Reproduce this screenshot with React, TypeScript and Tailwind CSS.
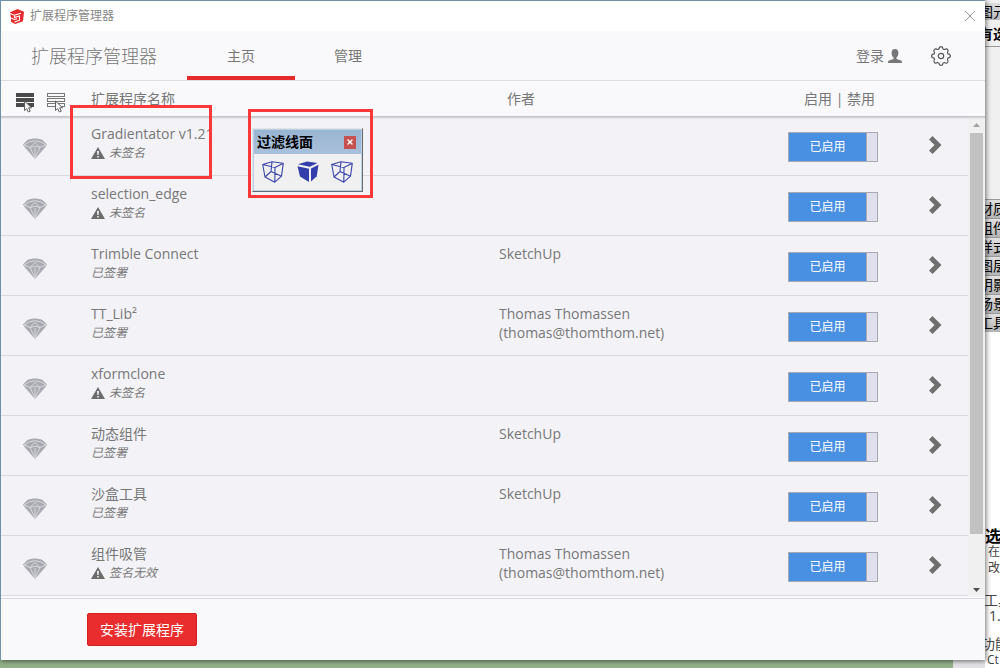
import { FiX } from 'react-icons/fi';

type Extension = {
	name: string;
	status: string;
	warning?: boolean;
	author?: string[];
};

const extensions: Extension[] = [
	{ name: 'Gradientator v1.21', status: '未签名', warning: true },
	{ name: 'selection_edge', status: '未签名', warning: true },
	{ name: 'Trimble Connect', status: '已签署', author: ['SketchUp'] },
	{
		name: 'TT_Lib²',
		status: '已签署',
		author: ['Thomas Thomassen', '(thomas@thomthom.net)'],
	},
	{ name: 'xformclone', status: '未签名', warning: true },
	{ name: '动态组件', status: '已签署', author: ['SketchUp'] },
	{ name: '沙盒工具', status: '已签署', author: ['SketchUp'] },
	{
		name: '组件吸管',
		status: '签名无效',
		warning: true,
		author: ['Thomas Thomassen', '(thomas@thomthom.net)'],
	},
];

const trayPanels = ['材质', '组件', '样式', '图层', '阴影', '场景', '工具'];

const SketchUpLogo = () => (
	<svg width="14" height="15" viewBox="0 0 14 15" aria-hidden="true">
		<path d="M0 3.200 7.500 0 14 2.800l-1 9.400L5 15l-4-2.200 0-4Z" fill="#e62b2d" />
		<path
			d="M0 4.500 4.500 6.200 11 4.200M4.500 6.200v2.300l5-1.500v4.200L4.500 13M1 9l3.500 1.500 2.500-.8"
			fill="none"
			stroke="#fff"
			strokeWidth="1.100"
		/>
	</svg>
);

const RowsIcon = ({ filled }: { filled?: boolean }) => (
	<svg width="19" height="28" viewBox="0 0 19 28" className="block" aria-hidden="true">
		{[8, 13, 18].map((y) => (
			<rect
				key={y}
				x="0.500"
				y={y + 0.5}
				width="17"
				height="3"
				fill={filled ? '#4a4a4a' : '#f9f9fb'}
				stroke={filled ? '#4a4a4a' : '#777'}
			/>
		))}
		<path
			d="M8.500 16v9.500l2.200-1.900 1.600 3.400 2-.9-1.600-3.300h2.900Z"
			fill="#f4f4f6"
			stroke="#555"
			strokeWidth="0.900"
		/>
	</svg>
);

const UserIcon = () => (
	<svg width="14" height="14" viewBox="0 0 14 14" aria-hidden="true">
		<path
			d="M7 0C4.700 0 3.600 1.600 3.600 3.900c0 2 .8 3.800 1.900 4.700v1.300L1 11.600C.3 12 0 12.500 0 14h14c0-1.500-.3-2-1-2.400L8.500 9.900V8.600c1.100-.9 1.900-2.700 1.900-4.700C10.400 1.600 9.300 0 7 0Z"
			fill="#777"
		/>
	</svg>
);

const GearIcon = () => (
	<svg
		width="20"
		height="20"
		viewBox="0 0 20 20"
		fill="none"
		stroke="#555"
		strokeWidth="1.200"
		strokeLinejoin="round"
		aria-hidden="true"
	>
		<circle cx="10" cy="10" r="2.700" />
		<path d="M7.900 3C8.200 1.200 8.600.6 10 .6s1.800.6 2.100 2.400q.9.500 1.400.5c1.500-1 2.200-1.100 3.100-.1s.9 1.600-.1 3.100q0 .5.500 1.400c1.800.3 2.400.7 2.400 2.100s-.6 1.800-2.400 2.100q-.5.900-.5 1.400c1 1.500 1.100 2.200.1 3.100s-1.600.9-3.100-.1q-.5 0-1.400.5c-.3 1.800-.7 2.400-2.100 2.400s-1.800-.6-2.100-2.400q-.9-.5-1.400-.5c-1.500 1-2.200 1.100-3.100.1s-.9-1.600.1-3.100q0-.5-.5-1.400C1.200 11.800.6 11.400.6 10s.6-1.800 2.400-2.100q.5-.9.5-1.400c-1-1.500-1.100-2.200-.1-3.100s1.600-.9 3.100.1q.5 0 1.400-.5Z" />
	</svg>
);

const GemIcon = () => (
	<svg width="24" height="21" viewBox="0 0 24 21" className="block" aria-hidden="true">
		<path d="M4.500 2C9 0 15 0 19.500 2L24 6.500 22.500 9 12 21 1.500 9 0 6.500Z" fill="#a9a9b1" />
		<path
			d="M1 7Q12-1.500 23 7M1 7l6 2.500L12 4.500l5 5L23 7M7 9.500Q12 7 17 9.500M7 9.500 12 20l5-10.500M12 10v8"
			fill="none"
			stroke="#dcdce2"
			strokeWidth="0.900"
		/>
	</svg>
);

const WarningIcon = () => (
	<svg width="14" height="12" viewBox="0 0 14 12" aria-hidden="true">
		<path d="M7 0 14 12H0Z" fill="#6c6c6c" />
		<path d="M6 4h2l-.4 4H6.400ZM6.200 9h1.600v1.600H6.200Z" fill="#f3f3f7" />
	</svg>
);

const ChevronIcon = () => (
	<svg width="14" height="18" viewBox="0 0 14 18" className="block" aria-hidden="true">
		<path d="M4.500 0 13.500 9l-9 9L1 14.500 6.500 9 1 3.500Z" fill="#6f6f6f" />
	</svg>
);

const WireCube = () => (
	<svg
		width="22"
		height="22"
		viewBox="0 0 22 22"
		fill="none"
		stroke="#3a44ac"
		strokeWidth="1.100"
		strokeLinejoin="round"
		aria-hidden="true"
	>
		<path d="M.7 3.500 10 .7l11.300 1.500-1.800 13-6.700 6L3 16ZM.7 3.500l12.300 3 8.300-4.300M13 6.500l-.2 14.700M10 .7 9 10.500 3 16M9 10.500l10.500 4.700" />
	</svg>
);

const SolidCube = () => (
	<svg width="22" height="22" viewBox="0 0 22 22" fill="#343eaa" aria-hidden="true">
		<path d="M1 3.300 10 .5l10.500 1.600-7.700 3.600Z" />
		<path d="M.5 5.200 12 7.700V21L3 15.600Z" />
		<path d="M14 7.500l7.500-3.800-1.800 11.600L14 20.500Z" />
	</svg>
);

const ExtensionRow = ({ extension }: { extension: Extension }) => (
	<tr className="h-[60px] align-top [&>td]:border-b [&>td]:border-[#d9d9df]">
		<td className="pt-[22px] pl-[22px]">
			<GemIcon />
		</td>
		<td className="pt-2">
			<p className="leading-[19px] whitespace-nowrap">{extension.name}</p>
			<p className="flex items-center gap-1 text-xs leading-5 italic">
				{extension.warning && <WarningIcon />}
				{extension.status}
			</p>
		</td>
		<td className="pt-2">
			{extension.author?.map((line) => (
				<p key={line} className="leading-[19px]">
					{line}
				</p>
			))}
		</td>
		<td className="pt-4">
			<button
				type="button"
				role="switch"
				aria-checked="true"
				className="flex h-[30px] w-[90px] border border-[#a9a9b2] bg-[#e0e0ec] text-xs text-white"
			>
				<span className="flex h-full w-[78px] items-center justify-center border-r border-[#a9a9b2] bg-[#4a90e2]">
					已启用
				</span>
			</button>
		</td>
		<td className="pt-5">
			<button type="button" aria-label={`${extension.name} 详情`} className="block">
				<ChevronIcon />
			</button>
		</td>
	</tr>
);

const ScrollBar = () => (
	<div className="flex w-[17px] shrink-0 flex-col items-center bg-[#f0f0f0]" aria-hidden="true">
		<div className="relative h-[35px] w-full bg-[#f9f9fb] shadow-[0_1px_0_#c4c4c8,0_2px_0_#d6d6da,0_3px_0_#e6e6ea]" />
		<svg width="17" height="17" viewBox="0 0 17 17" className="shrink-0">
			<path d="M5 11 8.500 7l3.500 4Z" fill="#a3a3a3" />
		</svg>
		<div className="w-[13px] grow-8 basis-0 bg-[#c1c1c1]" />
		<div className="grow basis-0" />
		<svg width="17" height="12" viewBox="0 0 17 12" className="shrink-0">
			<path d="M5 4h7L8.500 8Z" fill="#505050" />
		</svg>
	</div>
);

const FilterToolbar = () => (
	<div className="absolute top-[109px] left-[248px] z-20 border-3 border-[#fb3839] p-px pt-4 pr-[7px] pb-[3px]">
		<div className="w-[111px] border border-t-[#e3e3e3] border-r-[#696969] border-b-[#696969] border-l-[#e3e3e3] bg-[#b9d1ea] p-px">
			<div className="flex h-6 items-center justify-between bg-linear-to-b from-[#99b4d1] to-[#a9c0dc] pr-[5px] pl-[3px]">
				<h2 className="text-sm font-bold text-black">过滤线面</h2>
				<button
					type="button"
					aria-label="关闭"
					className="flex h-[13px] w-3 items-center justify-center bg-[#c75050] text-white"
				>
					<FiX size={8} strokeWidth={4} />
				</button>
			</div>
			<div className="flex h-9 items-center justify-between bg-[#f0f0f0] px-2">
				<button type="button" aria-label="线">
					<WireCube />
				</button>
				<button type="button" aria-label="面">
					<SolidCube />
				</button>
				<button type="button" aria-label="线面">
					<WireCube />
				</button>
			</div>
		</div>
	</div>
);

const Tray = () => (
	<aside className="flex w-[15px] shrink-0 flex-col overflow-hidden bg-white text-sm whitespace-nowrap text-black">
		<div className="h-[47px] border-b border-[#999] bg-[#f0f0f0]">
			<h2 className="mt-[3px] h-[17px] bg-linear-to-b from-[#ddd] to-[#bbb] -indent-[6px] leading-[17px]">
				图元
			</h2>
			<p className="-indent-[6px] leading-7 font-bold">有选</p>
		</div>
		<div className="h-[152px] bg-[#f0f0f0]" />
		{trayPanels.map((panel) => (
			<h2
				key={panel}
				className="h-[19px] border-t border-[#999] bg-linear-to-b from-[#e2e2e2] to-[#b5b5b5] -indent-[6px] leading-[18px]"
			>
				{panel}
			</h2>
		))}
		<div className="mt-auto leading-4 text-[#444]">
			<h2 className="text-base leading-4 font-bold text-black">选</h2>
			<p className="pl-[3px] text-xs leading-4">在</p>
			<p className="pl-[3px] text-xs leading-4">改</p>
			<h3 className="mt-4 -indent-px leading-4">工具</h3>
			<p className="pl-1 leading-4">1.</p>
			<h3 className="mt-3 -indent-[4px] leading-4">功能</h3>
			<p className="pl-0.5 text-xs leading-4">Ct</p>
		</div>
	</aside>
);

const App = () => (
	<div className="relative flex min-h-screen overflow-hidden bg-[#93b189] font-['Open_Sans','Noto_Sans_CJK_SC',sans-serif] text-sm text-[#777]">
		<div className="flex min-w-0 grow flex-col">
			<main className="relative flex grow flex-col border-t border-l border-[#6f8fab] bg-[#f9f9fb] shadow-[1px_1px_5px_#00000090]">
				<header className="flex h-[30px] items-center bg-white px-[9px]">
					<SketchUpLogo />
					<span className="ml-1.5 text-xs text-[#888]">扩展程序管理器</span>
					<button type="button" aria-label="关闭窗口" className="ml-auto">
						<svg width="12" height="12" viewBox="0 0 12 12" stroke="#999" aria-hidden="true">
							<path d="m1 1 10 10M11 1 1 11" />
						</svg>
					</button>
				</header>

				<nav className="flex h-[50px] items-stretch border-b border-[#dddde1] pr-[34px] pl-[30px]">
					<h1 className="w-[156px] self-center text-lg font-light">扩展程序管理器</h1>
					<a
						href="#home"
						className="flex w-[108px] items-center justify-center border-b-4 border-[#e62b2d] pt-1"
					>
						主页
					</a>
					<a href="#manage" className="flex w-[106px] items-center justify-center">
						管理
					</a>
					<button type="button" className="ml-auto flex items-center gap-1">
						登录
						<UserIcon />
					</button>
					<button type="button" aria-label="设置" className="ml-[29px] self-center">
						<GearIcon />
					</button>
				</nav>

				<div className="flex">
					<div className="min-w-0 grow">
						<table className="w-full table-fixed border-separate border-spacing-0">
							<colgroup>
								<col className="w-[90px]" />
								<col />
								<col className="w-[289px]" />
								<col className="w-[140px]" />
								<col className="w-10" />
							</colgroup>
							<thead>
								<tr className="relative h-[35px] bg-[#f9f9fb] text-left shadow-[0_1px_0_#c4c4c8,0_2px_0_#d6d6da,0_3px_0_#e6e6ea]">
									<th className="pl-[15px]">
										<div className="flex gap-3">
											<button type="button" aria-label="全选">
												<RowsIcon filled />
											</button>
											<button type="button" aria-label="取消全选">
												<RowsIcon />
											</button>
										</div>
									</th>
									<th className="font-normal">扩展程序名称</th>
									<th className="pl-2 font-normal">作者</th>
									<th className="pl-4 font-normal" colSpan={2}>
										<button type="button">启用</button> | <button type="button">禁用</button>
									</th>
								</tr>
							</thead>
							<tbody className="bg-[#f3f3f7]">
								{extensions.map((extension) => (
									<ExtensionRow key={extension.name} extension={extension} />
								))}
							</tbody>
						</table>
					</div>
					<ScrollBar />
				</div>

				<footer className="mt-0.5 flex grow items-center border-t border-[#d9d9df] pl-[86px]">
					<button
						type="button"
						className="h-[33px] rounded-xs border border-[#d32022] bg-[#e92c2e] px-3 text-white"
					>
						安装扩展程序
					</button>
				</footer>
			</main>
			<div className="flex h-2 justify-end">
				<div className="w-8 bg-[#e4e4e8]" />
			</div>
		</div>

		<Tray />

		{/* highlight around the first extension */}
		<div className="pointer-events-none absolute top-[105px] left-[70px] z-20 h-[74px] w-[142px] border-3 border-[#fb3839]" />
		<FilterToolbar />
	</div>
);

export default App;
